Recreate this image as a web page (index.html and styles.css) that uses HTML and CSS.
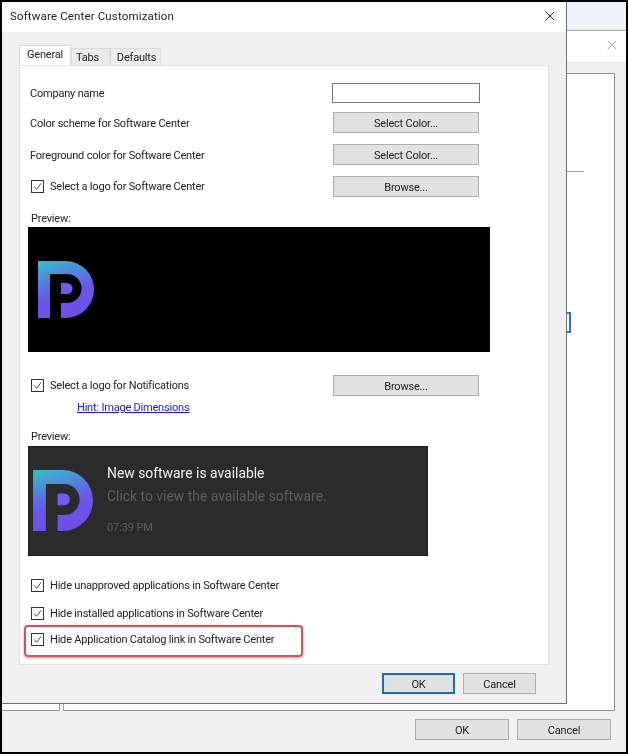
FILE: index.html
```html
<!DOCTYPE html>
<html lang="en">
<head>
<meta charset="utf-8">
<title>Software Center Customization</title>
<link rel="stylesheet" href="styles.css">
</head>
<body>
<svg class="defs" width="0" height="0" aria-hidden="true">
  <defs>
    <linearGradient id="logoFill" x1="0.25" y1="0" x2="0.55" y2="1">
      <stop offset="0" stop-color="#3fb4c8"/>
      <stop offset="0.28" stop-color="#4f86de"/>
      <stop offset="0.6" stop-color="#6a54ea"/>
      <stop offset="1" stop-color="#6f4fe8"/>
    </linearGradient>
    <symbol id="pLogo" viewBox="0 0 56 57">
      <path fill="url(#logoFill)" d="M0 0H27.5A28.5 28.5 0 0 1 27.5 57H0Z"/>
      <path fill="currentColor" d="M12 13H29A14.5 14.5 0 0 1 29 42H23V57H12Z"/>
      <path fill="#6f5cf0" d="M23 22H29A5.5 5.5 0 0 1 29 33H23Z"/>
    </symbol>
  </defs>
</svg>
<main class="desktop">
  <section class="back-window">
    <div class="back-strip"></div>
    <svg class="back-close" viewBox="0 0 12 12" aria-hidden="true"><path d="M1 1L11 11M11 1L1 11"/></svg>
    <div class="back-body">
      <div class="back-panel">
        <div class="back-rule"></div>
        <div class="back-focus"></div>
        <div class="back-split"></div>
      </div>
      <div class="back-actions">
        <button class="btn btn-back">OK</button>
        <button class="btn btn-back">Cancel</button>
      </div>
    </div>
  </section>

  <section class="dialog">
    <header class="titlebar">
      <h1 class="title">Software Center Customization</h1>
      <svg class="close" viewBox="0 0 12 12" aria-hidden="true"><path d="M1 1L11 11M11 1L1 11"/></svg>
    </header>
    <div class="content">
      <nav class="tabs">
        <span class="tab tab-active">General</span>
        <span class="tab tab-tabs">Tabs</span>
        <span class="tab tab-defaults">Defaults</span>
      </nav>
      <div class="page">
        <div class="row row-first">
          <span class="label">Company name</span>
          <span class="input"></span>
        </div>
        <div class="row">
          <span class="label">Color scheme for Software Center</span>
          <button class="btn btn-wide">Select Color...</button>
        </div>
        <div class="row">
          <span class="label">Foreground color for Software Center</span>
          <button class="btn btn-wide">Select Color...</button>
        </div>
        <div class="row">
          <label class="check"><span class="box"><svg viewBox="0 0 13 13"><path d="M2.5 6.5L5.5 9.8L10.8 2.8"/></svg></span>Select a logo for Software Center</label>
          <button class="btn btn-wide">Browse...</button>
        </div>
        <p class="preview-label">Preview:</p>
        <div class="logo-preview">
          <svg class="logo"><use href="#pLogo"/></svg>
        </div>
        <div class="row row-notify">
          <label class="check"><span class="box"><svg viewBox="0 0 13 13"><path d="M2.5 6.5L5.5 9.8L10.8 2.8"/></svg></span>Select a logo for Notifications</label>
          <button class="btn btn-wide">Browse...</button>
        </div>
        <a class="hint" href="#">Hint: Image Dimensions</a>
        <p class="preview-label preview-label-2">Preview:</p>
        <div class="toast">
          <svg class="toast-logo"><use href="#pLogo"/></svg>
          <div class="toast-text">
            <div class="toast-title">New software is available</div>
            <div class="toast-body">Click to view the available software.</div>
            <div class="toast-time">07:39 PM</div>
          </div>
        </div>
        <div class="hide-list">
          <label class="check"><span class="box"><svg viewBox="0 0 13 13"><path d="M2.5 6.5L5.5 9.8L10.8 2.8"/></svg></span>Hide unapproved applications in Software Center</label>
          <label class="check"><span class="box"><svg viewBox="0 0 13 13"><path d="M2.5 6.5L5.5 9.8L10.8 2.8"/></svg></span>Hide installed applications in Software Center</label>
          <label class="check check-last"><span class="box"><svg viewBox="0 0 13 13"><path d="M2.5 6.5L5.5 9.8L10.8 2.8"/></svg></span>Hide Application Catalog link in Software Center</label>
          <div class="highlight"></div>
        </div>
      </div>
      <div class="actions">
        <button class="btn btn-small btn-default">OK</button>
        <button class="btn btn-small">Cancel</button>
      </div>
    </div>
  </section>
</main>
</body>
</html>
```
FILE: styles.css
```css
* { box-sizing: border-box; }
html, body { margin: 0; padding: 0; }
body {
  width: 628px;
  height: 754px;
  overflow: hidden;
  background: #000;
  font-family: Roboto, "Open Sans", sans-serif;
  font-size: 11px;
  letter-spacing: -0.2px;
  color: #222;
}
.defs { position: absolute; }
.desktop {
  position: absolute;
  left: 2px;
  top: 2px;
  width: 624px;
  height: 750px;
  background: #f0f0f0;
  overflow: hidden;
  filter: blur(0.4px);
}
.btn {
  display: block;
  padding: 1px 0 0;
  font: inherit;
  letter-spacing: inherit;
  color: #222;
  background: #e1e1e1;
  border: 1px solid #adadad;
  border-radius: 0;
  text-align: center;
}

/* window behind the dialog */
.back-window {
  position: absolute;
  inset: 0;
  display: flex;
  flex-direction: column;
}
.back-strip {
  height: 29px;
  flex: none;
  background: #eff3f9;
  border-bottom: 1px solid #a8a8a8;
}
.back-close {
  position: absolute;
  left: 605px;
  top: 38px;
  width: 10px;
  height: 10px;
  fill: none;
  stroke: #b5b5b5;
  stroke-width: 1.3;
}
.back-body {
  flex: 1;
  background: linear-gradient(#fff 31px, #f0f0f0 31px);
  padding-top: 42px;
}
.back-panel {
  position: relative;
  height: 638px;
  width: 614px;
  background: #fff;
  border: 1px solid #8e8e8e;
  margin-left: -1px;
}
.back-rule {
  position: absolute;
  left: 564px;
  top: 97px;
  width: 18px;
  height: 1px;
  background: #a0a0a0;
}
.back-focus {
  position: absolute;
  left: 565px;
  top: 238px;
  width: 4px;
  height: 21px;
  border: 2px solid #2a74b0;
  border-left: 0;
}
.back-split {
  position: absolute;
  left: 57px;
  bottom: -1px;
  width: 5px;
  height: 8px;
  background: #f0f0f0;
  border-left: 1px solid #a5a5a5;
  border-right: 1px solid #a5a5a5;
}
.back-actions {
  display: flex;
  justify-content: flex-end;
  gap: 8px;
  padding: 8px 15px 0 0;
}
.btn-back { width: 94px; height: 21px; }

/* dialog */
.dialog {
  position: absolute;
  left: 0;
  top: 0;
  width: 565px;
  height: 702px;
  display: flex;
  flex-direction: column;
  background: #f0f0f0;
  border-right: 1px solid #6f6f6f;
  border-bottom: 1px solid #6f6f6f;
}
.titlebar {
  height: 30px;
  flex: none;
  display: flex;
  align-items: center;
  justify-content: space-between;
  padding: 0 11px 2px 8px;
  background: #fff;
}
.title {
  margin: 0;
  font-size: 11.5px;
  font-weight: 400;
  color: #222;
  letter-spacing: 0.15px;
}
.close {
  width: 10px;
  height: 10px;
  fill: none;
  stroke: #222;
  stroke-width: 1.2;
}
.content {
  flex: 1;
  padding: 13px 0 0 17px;
}
.tabs {
  display: flex;
  align-items: flex-end;
  height: 20px;
}
.tab {
  display: flex;
  align-items: center;
  justify-content: center;
  height: 17px;
  background: #ececec;
  border: 1px solid #dcdcdc;
  border-bottom: 0;
}
.tab-active {
  width: 52px;
  height: 20px;
  background: #fff;
  border-color: #dddddd;
  padding-bottom: 2px;
}
.tab-tabs { width: 39px; padding-right: 6px; }
.tab-defaults { width: 51px; padding-left: 2px; }
.page {
  width: 530px;
  height: 600px;
  padding: 17px 0 0 8px;
  background: #fff;
  border: 1px solid #e4e4e4;
  border-right-color: #dfdfdf;
}
.row {
  display: flex;
  align-items: center;
  justify-content: space-between;
  width: 451px;
  height: 21px;
  margin-bottom: 11px;
  padding-left: 2px;
}
.row-first { height: 20px; margin-bottom: 9px; width: 452px; }
.label { display: block; padding-top: 1px; }
.row-first .label { padding-top: 0; }
.input {
  width: 148px;
  height: 20px;
  background: #fff;
  border: 1px solid #7a7a7a;
}
.btn-wide { width: 146px; height: 21px; }
.check {
  display: flex;
  align-items: center;
  gap: 6px;
  height: 16px;
  margin-left: 1px;
}
.box {
  flex: none;
  width: 13px;
  height: 13px;
  background: #fff;
  border: 1px solid #333;
}
.box svg {
  display: block;
  width: 11px;
  height: 11px;
  fill: none;
  stroke: #3a3a3a;
  stroke-width: 1.1;
}
.preview-label {
  margin: 14px 0 1px;
  height: 15px;
  line-height: 15px;
  padding-left: 3px;
}
.logo-preview {
  width: 462px;
  height: 125px;
  padding: 34px 0 0 10px;
  background: #000;
  color: #000;
}
.logo { display: block; width: 56px; height: 57px; }
.row-notify { margin-top: 23px; margin-bottom: 0; }
.hint {
  display: block;
  margin: 4px 0 0 49px;
  height: 16px;
  line-height: 16px;
  color: #1a1ad0;
  text-decoration: underline;
}
.preview-label-2 { margin-top: 13px; margin-bottom: 2px; }
.toast {
  display: flex;
  width: 400px;
  height: 110px;
  padding: 23px 0 0 4px;
  background: #2b2b2b;
  border: 1px solid #1c1c1c;
  color: #2b2b2b;
  letter-spacing: 0;
}
.toast-logo { flex: none; width: 60px; height: 61px; }
.toast-text { margin: -7px 0 0 14px; }
.toast-title {
  height: 20px;
  line-height: 20px;
  font-size: 13.9px;
  color: #f2f2f2;
}
.toast-body {
  margin-top: 3px;
  height: 20px;
  line-height: 20px;
  font-size: 13.9px;
  color: #5f5f5f;
}
.toast-time {
  margin-top: 14px;
  height: 16px;
  line-height: 16px;
  font-size: 11px;
  letter-spacing: -0.1px;
  color: #5f5f5f;
}
.hide-list {
  position: relative;
  padding: 21px 0 0 2px;
  display: flex;
  flex-direction: column;
  gap: 12px;
}
.check-last { margin-top: -2px; }
.highlight {
  position: absolute;
  left: -4px;
  top: 69px;
  width: 279px;
  height: 32px;
  border: 2px solid #d9505a;
  border-radius: 4px;
  box-shadow: 0 1px 3px rgba(120, 60, 60, 0.45);
}
.actions {
  display: flex;
  justify-content: flex-end;
  gap: 8px;
  width: 517px;
  padding-top: 8px;
}
.btn-small { width: 73px; height: 21px; }
.btn-default { border: 2px solid #1c6fb5; }
```
